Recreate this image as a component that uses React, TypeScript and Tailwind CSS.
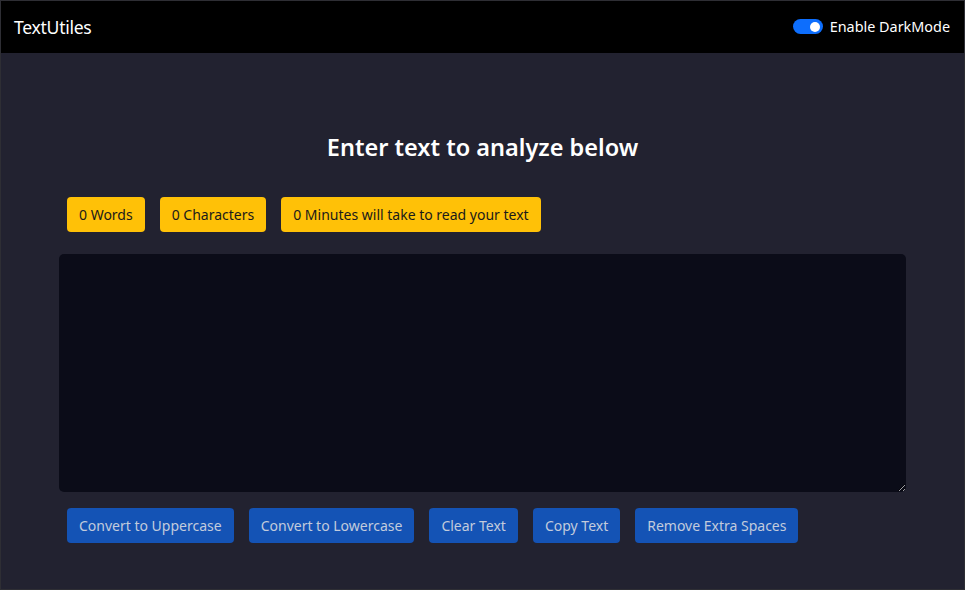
import { useState } from 'react'

const font = { fontFamily: '"Noto Sans", "Open Sans", sans-serif' }

export default function App() {
  const [text, setText] = useState('')
  const words = text.split(/\s+/).filter((w) => w.length > 0).length

  return (
    <div style={font} className="min-h-[590px] w-[965px] bg-[#222230] border border-[#2e2e34] flex flex-col">
      {/* Navbar */}
      <nav className="h-[52px] bg-black flex items-center justify-between pl-[13px] pr-[14px]">
        <span className="text-white text-[17.6px] tracking-[-0.3px]">TextUtiles</span>
        <label className="flex items-center gap-[7px] text-white text-[14.4px]">
          <span className="w-[30px] h-[15px] rounded-full bg-[#0d6efd] flex items-center justify-end pr-[3px]">
            <span className="w-[10px] h-[10px] rounded-full bg-white" />
          </span>
          Enable DarkMode
        </label>
      </nav>

      {/* Body */}
      <div className="flex flex-col px-[58px]">
        <h1 className="mt-[79px] text-center text-white text-[23.5px] font-semibold leading-[30px]">
          Enter text to analyze below
        </h1>

        <div className="mt-[35px] flex gap-[15px] px-[8px]">
          <span className="h-[35px] px-[12px] rounded-[4px] bg-[#ffc107] text-[#1a1a1a] text-[14px] flex items-center">0 Words</span>
          <span className="h-[35px] px-[12px] rounded-[4px] bg-[#ffc107] text-[#1a1a1a] text-[14px] flex items-center">{text.length} Characters</span>
          <span className="h-[35px] px-[12px] rounded-[4px] bg-[#ffc107] text-[#1a1a1a] text-[14px] flex items-center">
            {(0.008 * words) | 0} Minutes will take to read your text
          </span>
        </div>

        <textarea
          value={text}
          onChange={(e) => setText(e.target.value)}
          className="mt-[22px] h-[238px] w-full rounded-[5px] bg-[#0b0c18] text-white p-3 outline-none"
        />

        <div className="mt-[16px] flex gap-[15px] px-[8px]">
          {['Convert to Uppercase', 'Convert to Lowercase', 'Clear Text', 'Copy Text', 'Remove Extra Spaces'].map((b) => (
            <button
              key={b}
              className="h-[35px] px-[12px] rounded-[4px] bg-[#1453b5] text-[#c2cbdc] text-[14px] flex items-center"
            >
              {b}
            </button>
          ))}
        </div>
      </div>
    </div>
  )
}
